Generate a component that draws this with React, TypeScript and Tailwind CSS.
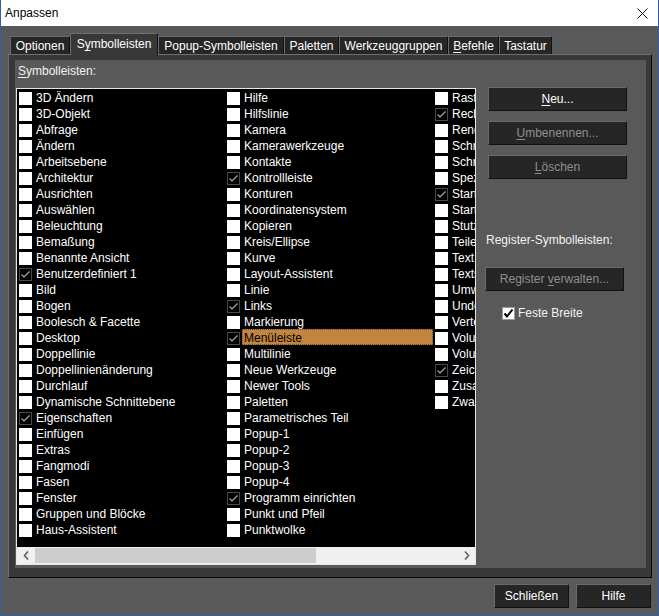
import React from "react"

type Item = { label: string; checked?: boolean; selected?: boolean }

const columns: Item[][] = [
  [
    { label: "3D Ändern" },
    { label: "3D-Objekt" },
    { label: "Abfrage" },
    { label: "Ändern" },
    { label: "Arbeitsebene" },
    { label: "Architektur" },
    { label: "Ausrichten" },
    { label: "Auswählen" },
    { label: "Beleuchtung" },
    { label: "Bemaßung" },
    { label: "Benannte Ansicht" },
    { label: "Benutzerdefiniert 1", checked: true },
    { label: "Bild" },
    { label: "Bogen" },
    { label: "Boolesch & Facette" },
    { label: "Desktop" },
    { label: "Doppellinie" },
    { label: "Doppellinienänderung" },
    { label: "Durchlauf" },
    { label: "Dynamische Schnittebene" },
    { label: "Eigenschaften", checked: true },
    { label: "Einfügen" },
    { label: "Extras" },
    { label: "Fangmodi" },
    { label: "Fasen" },
    { label: "Fenster" },
    { label: "Gruppen und Blöcke" },
    { label: "Haus-Assistent" },
  ],
  [
    { label: "Hilfe" },
    { label: "Hilfslinie" },
    { label: "Kamera" },
    { label: "Kamerawerkzeuge" },
    { label: "Kontakte" },
    { label: "Kontrollleiste", checked: true },
    { label: "Konturen" },
    { label: "Koordinatensystem" },
    { label: "Kopieren" },
    { label: "Kreis/Ellipse" },
    { label: "Kurve" },
    { label: "Layout-Assistent" },
    { label: "Linie" },
    { label: "Links", checked: true },
    { label: "Markierung" },
    { label: "Menüleiste", checked: true, selected: true },
    { label: "Multilinie" },
    { label: "Neue Werkzeuge" },
    { label: "Newer Tools" },
    { label: "Paletten" },
    { label: "Parametrisches Teil" },
    { label: "Popup-1" },
    { label: "Popup-2" },
    { label: "Popup-3" },
    { label: "Popup-4" },
    { label: "Programm einrichten", checked: true },
    { label: "Punkt und Pfeil" },
    { label: "Punktwolke" },
  ],
  [
    { label: "Raster" },
    { label: "Rechteck", checked: true },
    { label: "Rendern" },
    { label: "Schraffur" },
    { label: "Schrift" },
    { label: "Spezial" },
    { label: "Standard", checked: true },
    { label: "Standardansichten" },
    { label: "Stutzen" },
    { label: "Teilen" },
    { label: "Text" },
    { label: "Textstil" },
    { label: "Umwandeln" },
    { label: "Undo" },
    { label: "Verteilen" },
    { label: "Volumenkörper" },
    { label: "Volumen bearbeiten" },
    { label: "Zeichnen", checked: true },
    { label: "Zusammenfügen" },
    { label: "Zwangsbedingungen" },
  ],
]

const tabs = [
  { label: "Optionen", w: "w-[60px]" },
  { label: "Symbolleisten", w: "w-[88px]", active: true, key: "y" },
  { label: "Popup-Symbolleisten", w: "w-[126px]" },
  { label: "Paletten", w: "w-[55px]" },
  { label: "Werkzeuggruppen", w: "w-[109px]" },
  { label: "Befehle", w: "w-[51px]", key: "B" },
  { label: "Tastatur", w: "w-[53px]" },
]

// underline the accelerator letter, like a Win32 mnemonic
const Mnemonic = ({ text, at }: { text: string; at?: string }) => {
  if (!at) return <span>{text}</span>
  const i = text.indexOf(at)
  return (
    <span className="whitespace-pre">
      {text.slice(0, i)}
      <span className="underline underline-offset-2">{text[i]}</span>
      {text.slice(i + 1)}
    </span>
  )
}

const ListCheck = ({ checked }: { checked?: boolean }) =>
  checked ? (
    <div className="mt-[3px] h-[13px] w-[13px] shrink-0 border border-[#4a4a4a] bg-black">
      <svg width="11" height="11" viewBox="0 0 11 11">
        <polyline points="1.5,5.5 4,8 9.5,2.5" fill="none" stroke="#a8a8a8" strokeWidth="1.2" />
      </svg>
    </div>
  ) : (
    <div className="mt-[3px] h-[13px] w-[13px] shrink-0 bg-white" />
  )

const Row = ({ item }: { item: Item }) => (
  <div className="flex h-[16px] items-start pl-[2px]">
    <ListCheck checked={item.checked} />
    <div
      className={
        item.selected
          ? "ml-[2px] h-[16px] flex-1 border border-dotted border-[#6b4a22] bg-[#c3843f] pt-[1px] pl-[1px] leading-[14px] whitespace-nowrap text-black"
          : "ml-[2px] h-[16px] flex-1 pt-[1px] pl-[2px] leading-[16px] whitespace-nowrap text-white"
      }
    >
      {item.label}
    </div>
  </div>
)

const Chevron = ({ dir }: { dir: "left" | "right" }) => (
  <svg width="6" height="9" viewBox="0 0 6 9">
    <polyline
      points={dir === "left" ? "5,0.5 1.5,4.5 5,8.5" : "1,0.5 4.5,4.5 1,8.5"}
      fill="none"
      stroke="#606060"
      strokeWidth="1.6"
    />
  </svg>
)

const Btn = ({ children, disabled, w = "w-[139px]" }: { children: React.ReactNode; disabled?: boolean; w?: string }) => (
  <div
    className={`${w} flex h-[24px] items-center justify-center border border-t-[#6a6a6a] border-l-[#6a6a6a] border-r-[#111] border-b-[#111] bg-[#262626] ${
      disabled ? "text-[#8f8f8f]" : "text-white"
    }`}
  >
    {children}
  </div>
)

export default function App() {
  return (
    <div className="flex h-[616px] w-[659px] flex-col border-x border-b border-[#2d5fac] font-['Liberation_Sans',Arial,sans-serif] text-[12px] leading-[16px]">
      {/* title bar */}
      <div className="flex h-[26px] shrink-0 items-center justify-between bg-white pl-[4px] pr-[10px] text-black">
        <span>Anpassen</span>
        <svg width="11" height="11" viewBox="0 0 11 11">
          <path d="M0.5 0.5L10.5 10.5M10.5 0.5L0.5 10.5" stroke="#111" strokeWidth="1" />
        </svg>
      </div>

      <div className="flex flex-1 flex-col bg-[#595959] pt-[7px] pr-[6px] pb-[7px] pl-[7px]">
        {/* tabs */}
        <div className="ml-[2px] flex h-[21px] items-end">
          {tabs.map((t) =>
            t.active ? (
              <div
                key={t.label}
                className={`${t.w} relative z-10 -mb-px h-[22px] border-t border-l border-r border-t-[#6e6e6e] border-l-[#6e6e6e] border-r-[#111] bg-[#383838] pt-[2px] text-center text-white`}
              >
                <Mnemonic text={t.label} at={t.key} />
              </div>
            ) : (
              <div
                key={t.label}
                className={`${t.w} h-[18px] border-t border-l border-r border-t-[#6a6a6a] border-l-[#6a6a6a] border-r-[#111] bg-[#262626] pt-[1px] text-center text-white`}
              >
                <Mnemonic text={t.label} at={t.key} />
              </div>
            )
          )}
        </div>

        {/* tab page */}
        <div className="h-[524px] w-[644px] border border-t-[#6e6e6e] border-l-[#6e6e6e] border-r-[#0a0a0a] border-b-[#0a0a0a] bg-[#383838] pt-[5px] pr-[5px] pb-[9px] pl-[6px]">
          <div className="flex h-[508px] bg-[#595959]">
            <div className="ml-px flex flex-col">
              <div className="h-[28px] pt-[3px] pl-[2px] text-[#f2f2f2]">
                <Mnemonic text="Symbolleisten:" at="S" />
              </div>

              {/* toolbar list */}
              <div className="flex h-[477px] w-[460px] flex-col border border-[#e6e6e6] bg-black">
                <div className="flex h-[458px] overflow-hidden">
                  {columns.map((col, ci) => (
                    <div key={ci} className="w-[208px] shrink-0">
                      {col.map((item) => (
                        <Row key={item.label} item={item} />
                      ))}
                    </div>
                  ))}
                </div>
                <div className="flex h-[17px] items-center bg-[#f0f0f0]">
                  <div className="flex w-[17px] items-center justify-center">
                    <Chevron dir="left" />
                  </div>
                  <div className="ml-px h-[15px] w-[281px] bg-[#cdcdcd]" />
                  <div className="flex-1" />
                  <div className="flex w-[17px] items-center justify-center">
                    <Chevron dir="right" />
                  </div>
                </div>
              </div>
            </div>

            {/* buttons on the right */}
            <div className="ml-[12px] flex flex-col pt-[27px]">
              <Btn>
                <Mnemonic text="Neu..." at="N" />
              </Btn>
              <div className="mt-[10px]">
                <Btn disabled>
                  <Mnemonic text="Umbenennen..." at="U" />
                </Btn>
              </div>
              <div className="mt-[10px]">
                <Btn disabled>
                  <Mnemonic text="Löschen" at="L" />
                </Btn>
              </div>
              <div className="mt-[53px] -ml-[2px] h-[16px] text-[#f2f2f2]">Register-Symbolleisten:</div>
              <div className="mt-[19px] -ml-[3px]">
                <Btn disabled>
                  <Mnemonic text="Register verwalten..." at="v" />
                </Btn>
              </div>
              <div className="mt-[14px] ml-[14px] flex h-[16px] items-center gap-[3px] text-[#f2f2f2]">
                <div className="flex h-[13px] w-[13px] items-center justify-center border border-[#9a9a9a] bg-white">
                  <svg width="11" height="11" viewBox="0 0 11 11">
                    <polyline points="1.5,5.5 4,8.5 9.5,1.5" fill="none" stroke="#000" strokeWidth="2" />
                  </svg>
                </div>
                <span>Feste Breite</span>
              </div>
            </div>
          </div>
        </div>

        {/* dialog buttons */}
        <div className="mt-[6px] mr-px flex justify-end gap-[7px]">
          <Btn w="w-[75px]">Schließen</Btn>
          <Btn w="w-[75px]">Hilfe</Btn>
        </div>
      </div>
    </div>
  )
}
